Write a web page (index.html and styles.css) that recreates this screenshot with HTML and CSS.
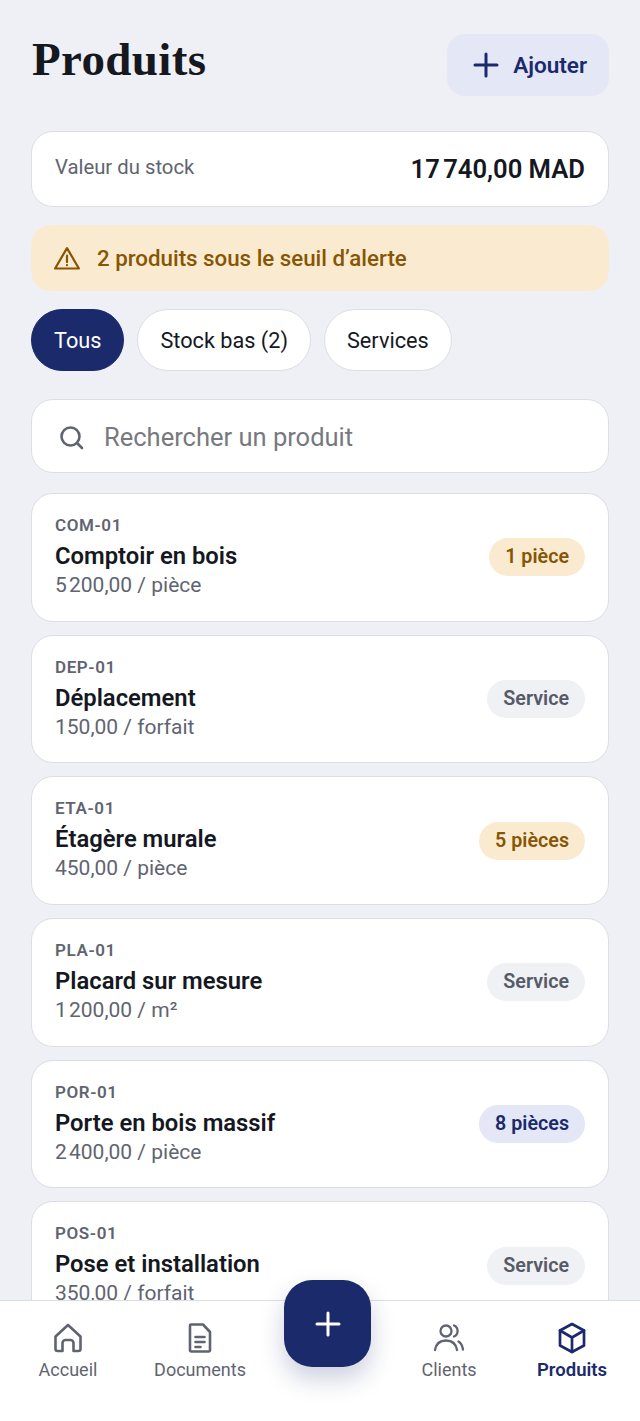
FILE: index.html
```html
<!doctype html>
<html lang="fr">
  <head>
    <meta charset="utf-8">
    <meta name="viewport" content="width=device-width, initial-scale=1.0">
    <title>Produits</title>
    <link rel="stylesheet" href="styles.css">
  </head>
  <body>
    <main class="page">
      <header class="top">
        <h1>Produits</h1>
        <button class="add">
          <svg width="30" height="30" viewBox="0 0 30 30" fill="none" stroke="currentColor" stroke-width="3" stroke-linecap="round"><path d="M15 4v22M4 15h22"/></svg>
          Ajouter
        </button>
      </header>
      <section class="stock">
        <span>Valeur du stock</span>
        <strong><span class="thin">17 740</span>,00 MAD</strong>
      </section>
      <section class="alert">
        <svg width="28" height="28" viewBox="0 0 24 24" fill="none" stroke="currentColor" stroke-width="1.9" stroke-linejoin="round" stroke-linecap="round"><path d="M12 3.500 1.800 21h20.400z"/><path d="M12 10v5.500M12 18v.2"/></svg>
        2 produits sous le seuil d’alerte
      </section>
      <nav class="filters">
        <a class="chip active">Tous</a>
        <a class="chip">Stock bas (2)</a>
        <a class="chip">Services</a>
      </nav>
      <label class="search">
        <svg width="28" height="28" viewBox="0 0 28 28" fill="none" stroke="currentColor" stroke-width="2.6" stroke-linecap="round"><circle cx="12.500" cy="14.500" r="9"/><path d="m19.500 21.500 4.500 4.500"/></svg>
        <span>Rechercher un produit</span>
      </label>
      <ul class="products">
        <li class="product">
          <div class="info">
            <div class="ref">COM-01</div>
            <div class="name">Comptoir en bois</div>
            <div class="price"><span class="thin">5 200</span>,00 / pièce</div>
          </div>
          <span class="badge low">1 pièce</span>
        </li>
        <li class="product">
          <div class="info">
            <div class="ref">DEP-01</div>
            <div class="name">Déplacement</div>
            <div class="price">150,00 / forfait</div>
          </div>
          <span class="badge service">Service</span>
        </li>
        <li class="product">
          <div class="info">
            <div class="ref">ETA-01</div>
            <div class="name">Étagère murale</div>
            <div class="price">450,00 / pièce</div>
          </div>
          <span class="badge low">5 pièces</span>
        </li>
        <li class="product">
          <div class="info">
            <div class="ref">PLA-01</div>
            <div class="name">Placard sur mesure</div>
            <div class="price"><span class="thin">1 200</span>,00 / m²</div>
          </div>
          <span class="badge service">Service</span>
        </li>
        <li class="product">
          <div class="info">
            <div class="ref">POR-01</div>
            <div class="name">Porte en bois massif</div>
            <div class="price"><span class="thin">2 400</span>,00 / pièce</div>
          </div>
          <span class="badge ok">8 pièces</span>
        </li>
        <li class="product">
          <div class="info">
            <div class="ref">POS-01</div>
            <div class="name">Pose et installation</div>
            <div class="price">350,00 / forfait</div>
          </div>
          <span class="badge service">Service</span>
        </li>
      </ul>
    </main>
    <footer class="tabbar">
      <a class="tab">
        <svg width="34" height="34" viewBox="0 0 34 34" fill="none" stroke="currentColor" stroke-width="2.600" stroke-linejoin="round" stroke-linecap="round"><path d="M4.500 15.500 17 4l12.500 11.500V28a2 2 0 0 1-2 2h-5v-8a3 3 0 0 0-3-3h-5a3 3 0 0 0-3 3v8h-5a2 2 0 0 1-2-2z"/></svg>
        Accueil
      </a>
      <a class="tab">
        <svg width="34" height="34" viewBox="0 0 34 34" fill="none" stroke="currentColor" stroke-width="2.600" stroke-linejoin="round" stroke-linecap="round"><path d="M8 3.500h12l7 7.500v18a1.500 1.500 0 0 1-1.500 1.500h-17A1.500 1.500 0 0 1 7 29V4.500a1 1 0 0 1 1-1z"/><path d="M12.500 16h9M12.500 21h9M12.500 26h5"/></svg>
        Documents
      </a>
      <a class="tab spacer"></a>
      <a class="tab">
        <svg width="34" height="34" viewBox="0 0 34 34" fill="none" stroke="currentColor" stroke-width="2.300" stroke-linecap="round"><circle cx="14" cy="10" r="5.500"/><path d="M3 29c1-6 5-9.500 11-9.500S24 23 25 29M22 4.500a6 6 0 0 1 0 11M26.500 20.500c2.500 1.500 4 4.500 4.500 8"/></svg>
        Clients
      </a>
      <a class="tab current">
        <svg width="34" height="34" viewBox="0 0 34 34" fill="none" stroke="currentColor" stroke-width="2.700" stroke-linejoin="round" stroke-linecap="round"><path d="M17 3 29 9.500v15L17 31 5 24.500v-15z"/><path d="M5 9.500 17 16.500l12-7M17 16.500V31"/></svg>
        Produits
      </a>
    </footer>
    <button class="fab">
      <svg width="26" height="26" viewBox="0 0 26 26" fill="none" stroke="currentColor" stroke-width="3" stroke-linecap="round"><path d="M13 2v22M2 13h22"/></svg>
    </button>
  </body>
</html>
```

FILE: styles.css
```css
* {
  box-sizing: border-box;
}
html, body {
  height: 100%;
}
body {
  background: #eef0f5;
  color: #15181f;
  font-family: "Roboto", "Liberation Sans", sans-serif;
  margin: 0;
  overflow: hidden;
}
.page {
  padding: 34px 31px 0;
}
.top {
  align-items: flex-start;
  display: flex;
  height: 62px;
  justify-content: space-between;
}
h1 {
  font: bold 47px/50px "Liberation Serif", serif;
  letter-spacing: 0.35px;
  margin: 0 0 0 1px;
}
button {
  border: none;
  cursor: pointer;
  font: inherit;
}
.thin {
  word-spacing: -3px;
}
.add {
  align-items: center;
  background: #e3e7f6;
  border-radius: 18px;
  color: #1b2a6b;
  display: flex;
  font-size: 22.500px;
  font-weight: 600;
  gap: 12px;
  height: 62px;
  padding: 0 22px 0 24px;
}
.stock {
  align-items: center;
  background: white;
  border: 1px solid #dcdee4;
  border-radius: 22px;
  display: flex;
  height: 76px;
  justify-content: space-between;
  margin-top: 35px;
  padding: 0 23px;
}
.stock > span {
  color: #5f6470;
  font-size: 20.300px;
  padding-bottom: 4px;
}
.stock strong {
  font-size: 25.600px;
  font-weight: 600;
}
.alert {
  align-items: center;
  background: #faebd0;
  border-radius: 20px;
  color: #875504;
  display: flex;
  font-size: 22.300px;
  font-weight: 500;
  gap: 16px;
  height: 66px;
  margin-top: 18px;
  padding: 0 22px;
}
.filters {
  display: flex;
  gap: 13px;
  margin-top: 18px;
}
.chip {
  align-items: center;
  background: white;
  border: 1px solid #dcdee4;
  border-radius: 31px;
  display: flex;
  font-size: 21.700px;
  height: 62px;
  padding: 0 22px;
}
.chip.active {
  background: #1b2a6b;
  border-color: #1b2a6b;
  color: white;
}
.search {
  align-items: center;
  background: white;
  border: 1px solid #dcdee4;
  border-radius: 22px;
  color: #5f6470;
  display: flex;
  gap: 18px;
  height: 74px;
  margin-top: 28px;
  padding: 0 22px 0 26px;
}
.search span {
  color: #77797f;
  font-size: 25.500px;
  padding-top: 2px;
}
.products {
  display: flex;
  flex-direction: column;
  gap: 13px;
  list-style: none;
  margin: 20px 0 0;
  padding: 0;
}
.product {
  align-items: center;
  background: white;
  border: 1px solid #dcdee4;
  border-radius: 22px;
  display: flex;
  height: 128.700px;
  justify-content: space-between;
  padding: 0 23px;
}
.info {
  padding-bottom: 2px;
}
.ref {
  color: #5f6470;
  font-size: 17px;
  font-weight: 600;
  letter-spacing: 0.6px;
  line-height: 22px;
  margin-top: -3px;
}
.name {
  font-size: 23.800px;
  font-weight: 600;
  line-height: 38px;
  margin-top: 1px;
}
.price {
  color: #5f6470;
  font-size: 21px;
  line-height: 22px;
  margin-top: -1px;
}
.badge {
  border-radius: 20px;
  font-size: 19.700px;
  font-weight: 600;
  line-height: 38px;
  padding: 0 16px;
}
.badge.low {
  background: #faebd0;
  color: #875504;
}
.badge.service {
  background: #f0f1f4;
  color: #555a66;
}
.badge.ok {
  background: #e3e7f6;
  color: #1b2a6b;
}
.tabbar {
  background: white;
  border-top: 1px solid #dcdee4;
  bottom: 0;
  display: grid;
  grid-template-columns: 136px 128px 120px 130px 116px;
  height: 121px;
  left: 0;
  padding-top: 20px;
  position: fixed;
  right: 0;
}
.tab {
  align-items: center;
  color: #5f6470;
  display: flex;
  flex-direction: column;
  font-size: 18px;
  gap: 4px;
}
.tab.current {
  color: #1b2a6b;
  font-size: 18.500px;
  font-weight: 600;
}
.fab {
  align-items: center;
  background: #1b2a6b;
  border-radius: 28px;
  bottom: 54px;
  box-shadow: 0 12px 24px rgba(27, 42, 107, 0.22);
  color: white;
  display: flex;
  height: 87px;
  justify-content: center;
  left: 284px;
  padding: 0;
  position: fixed;
  width: 87px;
}
```
